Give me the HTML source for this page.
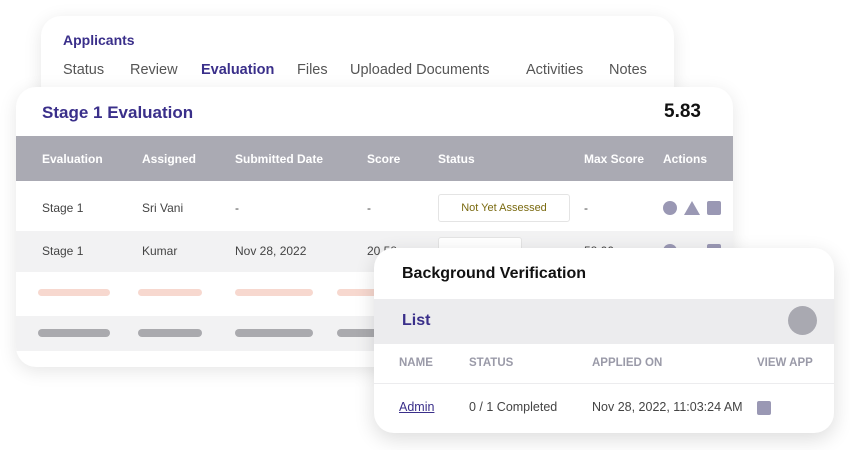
<!DOCTYPE html>
<html><head><meta charset="utf-8"><style>
*{margin:0;padding:0;box-sizing:border-box}
body{width:850px;height:450px;background:#fff;position:relative;overflow:hidden;font-family:"Liberation Sans",sans-serif;color:#444}
.abs{position:absolute;white-space:nowrap}
.card{position:absolute;background:#fff;border-radius:20px;box-shadow:0 4px 18px rgba(0,0,0,.10);overflow:hidden}
.sq{position:absolute;background:#9a98b4;border-radius:2px}
</style></head><body>
<div class="card" style="left:41px;top:16px;width:633px;height:90px">
 <div class="abs" style="left:22px;top:16px;font-size:14px;font-weight:bold;color:#3a2f8a">Applicants</div>
 <div class="abs" style="left:22px;top:46px;font-size:14.5px;color:#555">Status</div>
 <div class="abs" style="left:89px;top:46px;font-size:14.5px;color:#555">Review</div>
 <div class="abs" style="left:160px;top:46px;font-size:14.5px;font-weight:bold;color:#3a2f8a">Evaluation</div>
 <div class="abs" style="left:256px;top:46px;font-size:14.5px;color:#555">Files</div>
 <div class="abs" style="left:309px;top:46px;font-size:14.5px;color:#555">Uploaded Documents</div>
 <div class="abs" style="left:485px;top:46px;font-size:14.5px;color:#555">Activities</div>
 <div class="abs" style="left:568px;top:46px;font-size:14.5px;color:#555">Notes</div>
</div>
<div class="card" style="left:16px;top:87px;width:717px;height:280px">
 <div class="abs" style="left:26px;top:16px;font-size:17px;font-weight:bold;color:#3a2f8a">Stage 1 Evaluation</div>
 <div class="abs" style="left:648px;top:14px;font-size:19px;font-weight:bold;color:#111">5.83</div>
 <div style="position:absolute;left:0;top:49px;width:717px;height:45px;background:#aaaab3"></div>
 <div class="abs" style="left:26px;top:65px;font-size:12px;font-weight:bold;color:#fff">Evaluation</div>
 <div class="abs" style="left:126px;top:65px;font-size:12px;font-weight:bold;color:#fff">Assigned</div>
 <div class="abs" style="left:219px;top:65px;font-size:12px;font-weight:bold;color:#fff">Submitted Date</div>
 <div class="abs" style="left:351px;top:65px;font-size:12px;font-weight:bold;color:#fff">Score</div>
 <div class="abs" style="left:422px;top:65px;font-size:12px;font-weight:bold;color:#fff">Status</div>
 <div class="abs" style="left:568px;top:65px;font-size:12px;font-weight:bold;color:#fff">Max Score</div>
 <div class="abs" style="left:647px;top:65px;font-size:12px;font-weight:bold;color:#fff">Actions</div>
 <div class="abs" style="left:26px;top:114px;font-size:12px">Stage 1</div>
 <div class="abs" style="left:126px;top:114px;font-size:12px">Sri Vani</div>
 <div class="abs" style="left:219px;top:114px;font-size:12px">-</div>
 <div class="abs" style="left:351px;top:114px;font-size:12px">-</div>
 <div style="position:absolute;left:422px;top:107px;width:132px;height:28px;border:1px solid #e4e4e4;border-radius:3px;font-size:11px;color:#7a6a10;text-align:center;line-height:26px">Not Yet Assessed</div>
 <div class="abs" style="left:568px;top:114px;font-size:12px">-</div>
 <div style="position:absolute;left:647px;top:114px;width:14px;height:14px;border-radius:50%;background:#9a98b4"></div>
 <svg style="position:absolute;left:668px;top:114px" width="16" height="14"><polygon points="8,0 16,14 0,14" fill="#9a98b4"/></svg>
 <div class="sq" style="left:691px;top:114px;width:14px;height:14px"></div>
 <div style="position:absolute;left:0;top:144px;width:717px;height:41px;background:#f2f2f3"></div>
 <div class="abs" style="left:26px;top:157px;font-size:12px">Stage 1</div>
 <div class="abs" style="left:126px;top:157px;font-size:12px">Kumar</div>
 <div class="abs" style="left:219px;top:157px;font-size:12px">Nov 28, 2022</div>
 <div class="abs" style="left:351px;top:157px;font-size:12px">20.58</div>
 <div class="abs" style="left:568px;top:157px;font-size:12px">58.00</div>
 <div style="position:absolute;left:647px;top:157px;width:14px;height:14px;border-radius:50%;background:#9a98b4"></div>
 <div class="sq" style="left:691px;top:157px;width:14px;height:14px"></div>
 <div style="position:absolute;left:422px;top:150px;width:84px;height:28px;border:1px solid #e4e4e4;border-radius:3px;background:#fff"></div>
 <div style="position:absolute;left:22px;top:202px;width:72px;height:7px;border-radius:4px;background:#f7d8cf"></div>
 <div style="position:absolute;left:122px;top:202px;width:64px;height:7px;border-radius:4px;background:#f7d8cf"></div>
 <div style="position:absolute;left:219px;top:202px;width:78px;height:7px;border-radius:4px;background:#f7d8cf"></div>
 <div style="position:absolute;left:321px;top:202px;width:60px;height:7px;border-radius:4px;background:#f7d8cf"></div>
 <div style="position:absolute;left:0;top:229px;width:717px;height:35px;background:#f2f2f3"></div>
 <div style="position:absolute;left:22px;top:242px;width:72px;height:8px;border-radius:4px;background:#aaaaae"></div>
 <div style="position:absolute;left:122px;top:242px;width:64px;height:8px;border-radius:4px;background:#aaaaae"></div>
 <div style="position:absolute;left:219px;top:242px;width:78px;height:8px;border-radius:4px;background:#aaaaae"></div>
 <div style="position:absolute;left:321px;top:242px;width:60px;height:8px;border-radius:4px;background:#aaaaae"></div>
</div>
<div class="card" style="left:374px;top:248px;width:460px;height:185px;box-shadow:0 6px 20px rgba(0,0,0,.14)">
 <div class="abs" style="left:28px;top:17px;font-size:16px;font-weight:bold;color:#111">Background Verification</div>
 <div style="position:absolute;left:0;top:51px;width:460px;height:45px;background:#ececee"></div>
 <div class="abs" style="left:28px;top:64px;font-size:16px;font-weight:bold;color:#3a2f8a">List</div>
 <div style="position:absolute;left:414px;top:58px;width:29px;height:29px;border-radius:50%;background:#a9a9b1"></div>
 <div class="abs" style="left:25px;top:109px;font-size:11.5px;font-weight:bold;color:#9a9aa8">NAME</div>
 <div class="abs" style="left:95px;top:109px;font-size:11.5px;font-weight:bold;color:#9a9aa8">STATUS</div>
 <div class="abs" style="left:218px;top:109px;font-size:11.5px;font-weight:bold;color:#9a9aa8">APPLIED ON</div>
 <div class="abs" style="left:383px;top:109px;font-size:11.5px;font-weight:bold;color:#9a9aa8">VIEW APP</div>
 <div style="position:absolute;left:0;top:135px;width:460px;height:1px;background:#ececee"></div>
 <div class="abs" style="left:25px;top:152px;font-size:12.5px;color:#3a2f8a;text-decoration:underline">Admin</div>
 <div class="abs" style="left:95px;top:152px;font-size:12.5px">0 / 1 Completed</div>
 <div class="abs" style="left:218px;top:152px;font-size:12.5px">Nov 28, 2022, 11:03:24 AM</div>
 <div class="sq" style="left:383px;top:153px;width:14px;height:14px"></div>
</div>
</body></html>
